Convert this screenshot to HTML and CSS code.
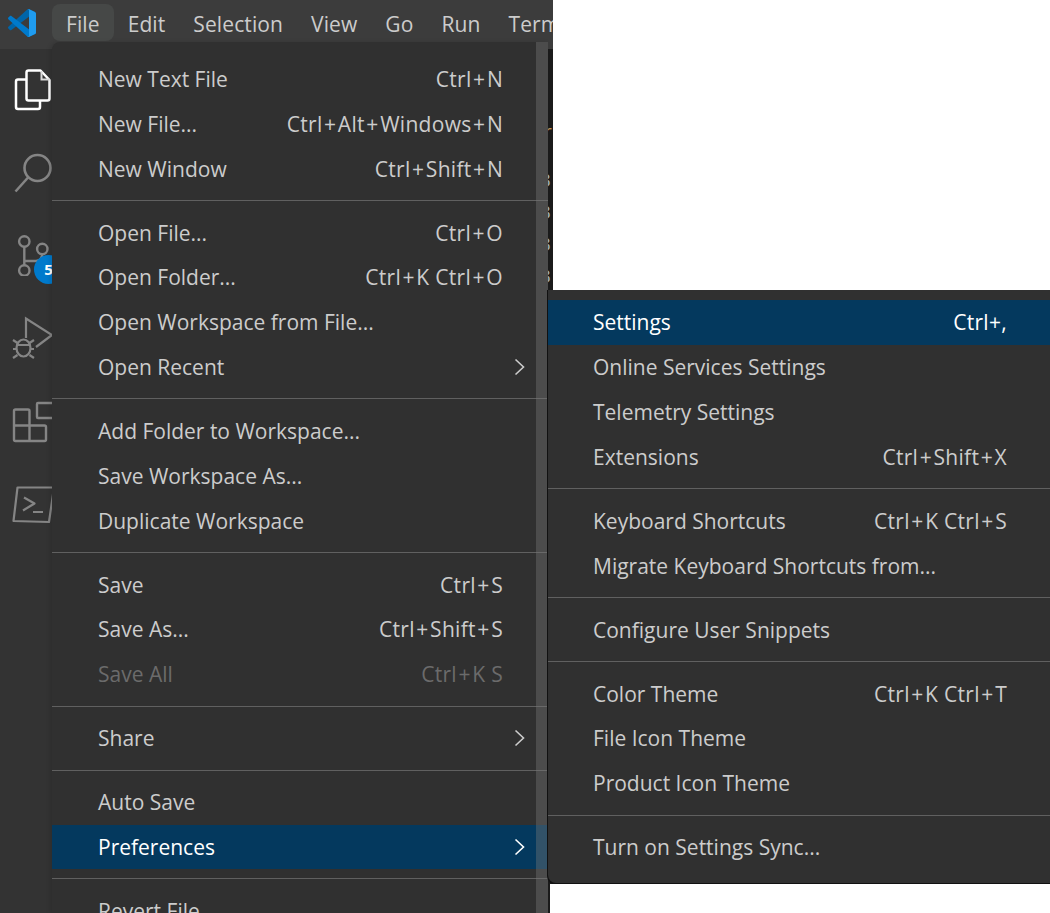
FILE: index.html
```html
<!DOCTYPE html>
<html lang="en">
<head>
<meta charset="utf-8">
<title>Visual Studio Code menu</title>
<link rel="stylesheet" href="styles.css">
</head>
<body>
<div class="app">
  <header class="titlebar">
    <svg class="logo" viewBox="0 0 100 100" width="28" height="28" aria-hidden="true">
      <path fill="#0065a9" d="M96.46 10.8 75.86.88C73.47-.27 70.62.21 68.75 2.08L1.3 63.58c-1.81 1.65-1.81 4.51 0 6.16l5.51 5.01c1.49 1.35 3.72 1.45 5.32.24L93.36 13.37C96.09 11.3 100 13.25 100 16.67v-.24c0-2.4-1.38-4.59-3.54-5.63z"/>
      <path fill="#007acc" d="M96.46 89.2 75.86 99.12c-2.39 1.15-5.24.67-7.11-1.2L1.3 36.42c-1.81-1.66-1.81-4.51 0-6.17l5.51-5c1.49-1.35 3.72-1.45 5.32-.24l81.23 61.62c2.73 2.07 6.64.12 6.64-3.3v.24c0 2.4-1.38 4.59-3.54 5.63z"/>
      <path fill="#1f9cf0" d="M75.86 99.13c-2.39 1.14-5.24.66-7.11-1.21C71.06 100.22 75 98.59 75 95.33V4.67c0-3.26-3.94-4.89-6.25-2.59C70.62.21 73.47-.27 75.86.87l20.6 9.91C98.62 11.82 100 14.01 100 16.41v67.18c0 2.4-1.38 4.59-3.54 5.63z"/>
    </svg>
    <nav class="menubar">
      <span class="menu-title is-open">File</span>
      <span class="menu-title">Edit</span>
      <span class="menu-title">Selection</span>
      <span class="menu-title">View</span>
      <span class="menu-title">Go</span>
      <span class="menu-title">Run</span>
      <span class="menu-title">Terminal</span>
    </nav>
  </header>
  <div class="workbench">
    <aside class="activitybar">
      <svg class="act act-files" viewBox="0 0 38 42" width="38" height="42" aria-hidden="true">
        <path fill="none" stroke="#fff" stroke-width="2.500" stroke-linejoin="round" d="M12 10.500H4a2 2 0 0 0-2 2V38a2 2 0 0 0 2 2h20a2 2 0 0 0 2-2v-6"/>
        <path fill="#333" stroke="#fff" stroke-width="2.500" stroke-linejoin="round" d="M12.500 3.500a2 2 0 0 1 2-2h12l9 9.500V29.500a2 2 0 0 1-2 2h-19a2 2 0 0 1-2-2z"/>
        <path fill="none" stroke="#d8d8d8" stroke-width="2" d="M27.500 2v8.500h8"/>
      </svg>
      <svg class="act act-search" viewBox="0 0 38 42" width="38" height="42" aria-hidden="true">
        <circle cx="23.500" cy="16" r="13" fill="none" stroke="#858585" stroke-width="2.600"/>
        <path stroke="#858585" stroke-width="2.600" d="M14.500 25 1.500 39.500"/>
      </svg>
      <div class="act-scm">
        <svg viewBox="0 0 38 42" width="38" height="42" aria-hidden="true">
          <g fill="none" stroke="#858585" stroke-width="2.400">
            <circle cx="10.300" cy="7.500" r="5.200"/><circle cx="28.300" cy="15" r="5.200"/><circle cx="10.300" cy="36.500" r="5.200"/>
            <path d="M10.300 12.700V31.300M10.300 27H22c4 0 6-3 6.300-6.800"/>
          </g>
        </svg>
        <span class="badge">5</span>
      </div>
      <svg class="act act-debug" viewBox="0 0 42 50" width="42" height="50" aria-hidden="true">
        <g fill="none" stroke="#858585" stroke-width="2.200">
          <path d="M14 22V2.500L40 19 24 31"/>
          <ellipse cx="11.500" cy="32" rx="7" ry="8.500"/>
          <path d="M4.500 29h14M1 24l4.500 3M1 33h3.500M1 42l4.500-3M22 24l-4.500 3M22 33h-3.500M22 42l-4.500-3"/>
        </g>
      </svg>
      <svg class="act act-ext" viewBox="0 0 42 44" width="42" height="44" aria-hidden="true">
        <g fill="none" stroke="#858585" stroke-width="2.400" stroke-linejoin="round">
          <rect x="25" y="3" width="17" height="15" rx="1"/>
          <path d="M3.500 9.500H16a1.500 1.500 0 0 1 1.500 1.500V41H3.500A1.500 1.500 0 0 1 2 39.500V11a1.500 1.500 0 0 1 1.500-1.500zM2 25.500H32.500A1.500 1.500 0 0 1 34 27V39.500A1.500 1.500 0 0 1 32.500 41H17.500"/>
        </g>
      </svg>
      <svg class="act act-term" viewBox="0 0 42 40" width="42" height="40" aria-hidden="true">
        <g fill="none" stroke="#858585" stroke-width="2.200" stroke-linejoin="round">
          <path d="M5.500 2.500H42L37 37 1.500 36z"/>
          <path d="M12 12.500 22.500 18.500 11 25.500M21 27H31"/>
        </g>
      </svg>
    </aside>
    <main class="editor">
      <div class="editor-tabs"></div>
      <div class="editor-tab-text">r</div>
      <div class="editor-lines">
        <span>3</span><span>3</span><span>3</span><span>3</span>
      </div>
    </main>
  </div>
</div>

<div class="menu file-menu">
  <div class="menu-list">
    <div class="row"><span>New Text File</span><kbd>Ctrl<i>+</i>N</kbd></div>
    <div class="row"><span>New File...</span><kbd>Ctrl<i>+</i>Alt<i>+</i>Windows<i>+</i>N</kbd></div>
    <div class="row"><span>New Window</span><kbd>Ctrl<i>+</i>Shift<i>+</i>N</kbd></div>
    <div class="sep"></div>
    <div class="row"><span>Open File...</span><kbd>Ctrl<i>+</i>O</kbd></div>
    <div class="row"><span>Open Folder...</span><kbd>Ctrl<i>+</i>K Ctrl<i>+</i>O</kbd></div>
    <div class="row"><span>Open Workspace from File...</span></div>
    <div class="row"><span>Open Recent</span><svg class="chev" viewBox="0 0 12 18" width="12" height="18" aria-hidden="true"><path d="M1.500 1.500 9.500 9l-8 7.500"/></svg></div>
    <div class="sep"></div>
    <div class="row"><span>Add Folder to Workspace...</span></div>
    <div class="row"><span>Save Workspace As...</span></div>
    <div class="row"><span>Duplicate Workspace</span></div>
    <div class="sep"></div>
    <div class="row"><span>Save</span><kbd>Ctrl<i>+</i>S</kbd></div>
    <div class="row"><span>Save As...</span><kbd>Ctrl<i>+</i>Shift<i>+</i>S</kbd></div>
    <div class="row is-disabled"><span>Save All</span><kbd>Ctrl<i>+</i>K S</kbd></div>
    <div class="sep"></div>
    <div class="row"><span>Share</span><svg class="chev" viewBox="0 0 12 18" width="12" height="18" aria-hidden="true"><path d="M1.500 1.500 9.500 9l-8 7.500"/></svg></div>
    <div class="sep"></div>
    <div class="row"><span>Auto Save</span></div>
    <div class="row is-active"><span>Preferences</span><svg class="chev" viewBox="0 0 12 18" width="12" height="18" aria-hidden="true"><path d="M1.500 1.500 9.500 9l-8 7.500"/></svg></div>
    <div class="sep"></div>
    <div class="row"><span>Revert File</span></div>
  </div>
  <div class="scrollbar"></div>
</div>

<div class="menu sub-menu">
  <div class="row is-active"><span>Settings</span><kbd>Ctrl+,</kbd></div>
  <div class="row"><span>Online Services Settings</span></div>
  <div class="row"><span>Telemetry Settings</span></div>
  <div class="row"><span>Extensions</span><kbd>Ctrl<i>+</i>Shift<i>+</i>X</kbd></div>
  <div class="sep"></div>
  <div class="row"><span>Keyboard Shortcuts</span><kbd>Ctrl<i>+</i>K Ctrl<i>+</i>S</kbd></div>
  <div class="row"><span>Migrate Keyboard Shortcuts from...</span></div>
  <div class="sep"></div>
  <div class="row"><span>Configure User Snippets</span></div>
  <div class="sep"></div>
  <div class="row"><span>Color Theme</span><kbd>Ctrl<i>+</i>K Ctrl<i>+</i>T</kbd></div>
  <div class="row"><span>File Icon Theme</span></div>
  <div class="row"><span>Product Icon Theme</span></div>
  <div class="sep"></div>
  <div class="row"><span>Turn on Settings Sync...</span></div>
</div>
<div class="below-sub"></div>
</body>
</html>
```
FILE: styles.css
```css
* { box-sizing: border-box; }
html, body {
  margin: 0;
  height: 913px;
  overflow: hidden;
  background: #fff;
  font-family: "Open Sans", "Noto Sans", sans-serif;
}
.app {
  width: 553px;
  height: 913px;
  display: flex;
  flex-direction: column;
  background: #333;
  overflow: hidden;
}
.titlebar {
  flex: 0 0 49px;
  display: flex;
  align-items: flex-start;
  background: #3c3c3c;
  padding: 4px 0 0 8px;
}
.logo { flex: none; margin-right: 16px; margin-top: 5px; }
.menubar { display: flex; white-space: nowrap; }
.menu-title {
  height: 37px;
  line-height: 40px;
  padding: 0 14px;
  font-size: 21px;
  letter-spacing: .1px;
  color: #cccccc;
  border-radius: 8px;
}
.menu-title.is-open { background: #464847; }
.workbench { flex: 1; display: flex; min-height: 0; }
.activitybar {
  flex: 0 0 548px;
  background: #333;
  display: flex;
  flex-direction: column;
  align-items: flex-start;
  padding-left: 14px;
}
.act { display: block; flex: none; }
.act-files { margin-top: 20px; }
.act-search { margin-top: 41px; }
.act-scm { position: relative; width: 38px; height: 42px; margin-top: 40px; }
.act-scm svg { display: block; }
.badge {
  position: absolute;
  left: 20px;
  top: 21px;
  width: 29px;
  height: 29px;
  border-radius: 50%;
  background: #007acc;
  color: #fff;
  font-size: 15px;
  font-weight: 700;
  line-height: 28px;
  text-align: center;
}
.act-debug { margin: 40px 0 0 -2px; }
.act-ext { margin: 34px 0 0 -2px; }
.act-term { margin: 41px 0 0 -2px; }
.editor {
  flex: 1;
  background: #1b1b1b;
  color: #9fb0bd;
  font-size: 19px;
  overflow: hidden;
}
.editor-tabs { height: 70px; }
.editor-tab-text { height: 24px; margin-left: -4px; line-height: 24px; color: #c09553; }
.editor-lines { display: flex; flex-direction: column; margin: 21px 0 0 -8px; }
.editor-lines span { height: 32px; line-height: 32px; }
.menu {
  position: absolute;
  background: #303030;
  color: #cccccc;
  font-size: 21px;
}
.file-menu {
  left: 52px;
  top: 42px;
  width: 496px;
  height: 871px;
  display: flex;
  border-radius: 8px 0 0 0;
  overflow: hidden;
  box-shadow: -2px 0 4px rgba(0, 0, 0, .12);
}
.menu-list { flex: 1; min-width: 0; padding-top: 14.700px; }
.scrollbar { position: absolute; right: 0; top: 0; bottom: 0; width: 12px; background: rgba(121, 121, 121, .4); }
.sub-menu {
  left: 548px;
  top: 290px;
  width: 502px;
  height: 593px;
  padding-top: 10px;
  border-radius: 0 0 0 8px;
  box-shadow: 0 1px 0 1px #111;
}
.row {
  height: 44.800px;
  display: flex;
  align-items: center;
  justify-content: space-between;
  padding: 0 45px 0 46px;
  white-space: nowrap;
}
.sub-menu .row { padding: 0 43px 0 45px; }
.row kbd { font: inherit; letter-spacing: .3px; }
.row kbd i { font-style: normal; padding: 0 1.500px; }
.is-active { background: #04395e; color: #fff; }
.is-disabled { color: #6b6b6b; }
.sep { height: 19.200px; padding-top: 9px; }
.sep::before { content: ""; display: block; height: 1px; background: #606060; }
.chev { fill: none; stroke: currentColor; stroke-width: 1.600; margin-right: -23px; }
.below-sub { position: absolute; left: 550px; top: 884px; width: 500px; height: 29px; background: #fff; }
```
